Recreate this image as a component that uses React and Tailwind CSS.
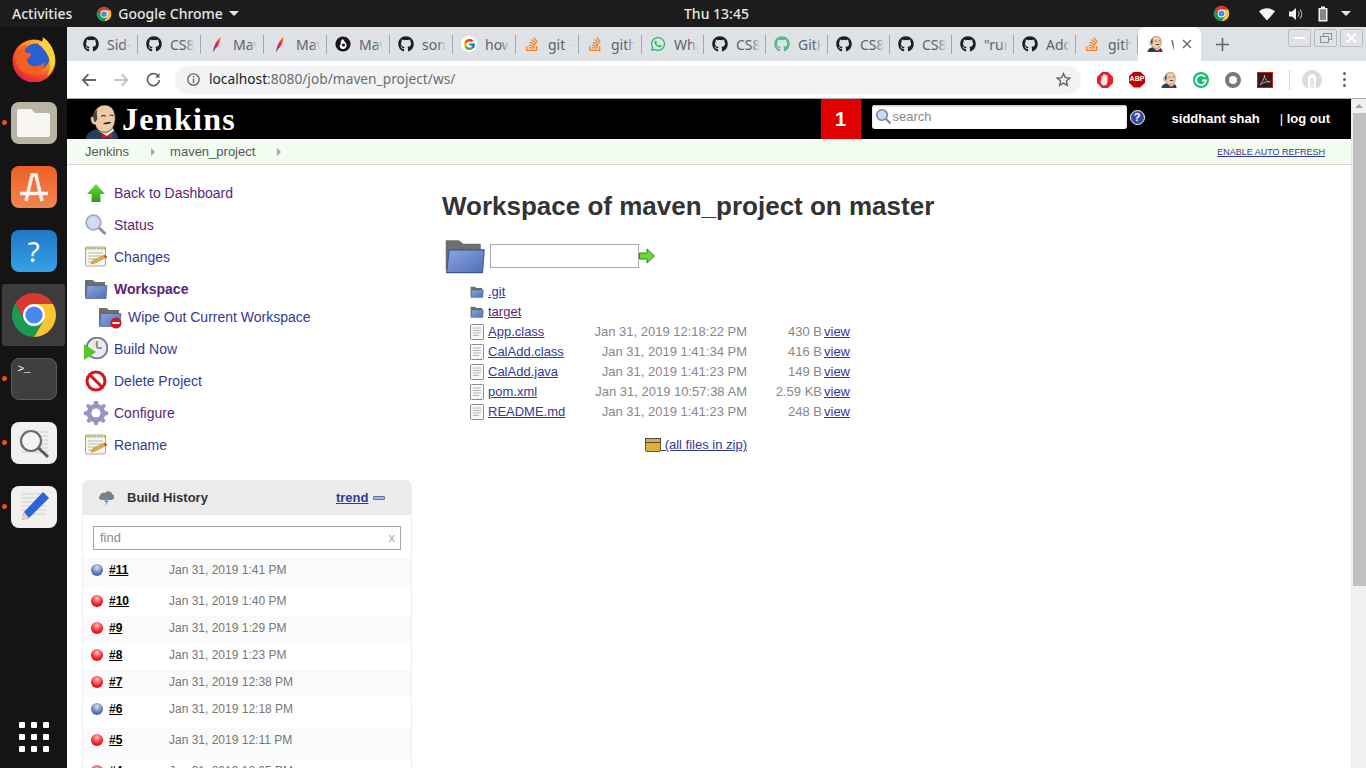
import { FaGithub, FaStackOverflow, FaWhatsapp } from 'react-icons/fa';
import { FcGoogle } from 'react-icons/fc';

const uiFont = "font-['Noto_Sans',sans-serif]";

function ChromeIcon({ size = 16 }) {
  return (
    <svg width={size} height={size} viewBox="0 0 48 48">
      <path d="M5.5 12A22 22 0 0 1 43 13L24 13L14.5 29.5Z" fill="#d93a2f" />
      <path d="M43 13A22 22 0 0 1 24 46L33.5 29.5L24 13Z" fill="#fbc531" />
      <path d="M24 46A22 22 0 0 1 5.5 12L14.5 29.5L33.5 29.5Z" fill="#179c52" />
      <circle cx="24" cy="24" r="11" fill="#fff" />
      <circle cx="24" cy="24" r="8.6" fill="#4688f1" />
    </svg>
  );
}

function FirefoxIcon() {
  return (
    <svg width="46" height="46" viewBox="0 0 46 46">
      <defs>
        <radialGradient id="ffOuter" cx="0.7" cy="0.2" r="0.95">
          <stop offset="0" stopColor="#ffd23a" />
          <stop offset="0.45" stopColor="#ff8a1f" />
          <stop offset="0.8" stopColor="#f0312f" />
          <stop offset="1" stopColor="#c81c78" />
        </radialGradient>
      </defs>
      <circle cx="23" cy="25" r="21.5" fill="url(#ffOuter)" />
      <circle cx="25" cy="21" r="13.5" fill="#2a5fd0" />
      <path d="M27 8C33 6 32 3 31.5 1C38 5 44 13 44 24C44 30 41 36 36 40C40 33 40 24 36 18C34 14 30 10 27 8Z" fill="#ffd23a" />
      <path d="M4 19C7 13 12 9 17 9C14 12 13 14 15 17C18 16 21 18 20 20C16 22 15 25 18 28C23 32 30 30 34 26C33 34 26 40 17 38C9 36 4 28 4 19Z" fill="#f5601f" />
    </svg>
  );
}

function JenkinsHead({ size = 16 }) {
  return (
    <svg width={size} height={size} viewBox="0 0 34 36">
      <path d="M0 36C0 31 5 27 10 26L28 26C31 28 34 31 34 36Z" fill="#23405f" />
      <path d="M14 28L22 33L30 27L28 24L14 24Z" fill="#eee" />
      <path d="M8 13C8 5 14 0 20 0C27 0 31 6 31 14C31 22 27 29 20 29C15 29 11 26 10 21C7 21 5 18 5 15C5 12 7 11 8 13Z" fill="#efcaa4" stroke="#2d2522" strokeWidth=".8" />
      <path d="M8 13C8 9 10 6 12 5C11 9 12 12 12 15C11 17 10 18 9 18C8 16 8 14 8 13Z" fill="#4a4442" />
      <path d="M16 12C18 11 20 11 21 12M25 11C26 10.5 28 10.5 29 11.5" stroke="#2d2522" strokeWidth="1.1" fill="none" />
      <path d="M18 20C20 18 24 18 27 18C26 20 21 21 18 20Z" fill="#2d2522" />
      <path d="M17 30L22.5 33L28 30V36L22.5 33.5L17 36Z" fill="#d3161c" />
    </svg>
  );
}

function FeatherIcon() {
  return (
    <svg width="16" height="16" viewBox="0 0 16 16">
      <defs>
        <linearGradient id="feather" x1="0" y1="1" x2="1" y2="0">
          <stop offset="0" stopColor="#6f3a9e" />
          <stop offset="0.5" stopColor="#e0264f" />
          <stop offset="1" stopColor="#f79321" />
        </linearGradient>
      </defs>
      <path d="M4 15.5C5 10 7.5 4 11.5 1C11.5 5 10 10 6 13L4.8 15.5Z" fill="url(#feather)" />
    </svg>
  );
}

function MoonIcon() {
  return (
    <svg width="16" height="16" viewBox="0 0 16 16">
      <circle cx="8" cy="8" r="7.6" fill="#161616" />
      <path d="M8 3C6 4 5 6 6 8C4 9 4.5 12 7 13C10 13.5 12 11 11.5 8.5C11 6 9 5.5 8 3Z" fill="#fff" />
      <circle cx="8.5" cy="9" r="1.6" fill="#161616" />
    </svg>
  );
}

const tabs = [
  { title: 'Sid-', kind: 'github', width: 'w-[63px]' },
  { title: 'CS8', kind: 'github', width: 'w-[63px]' },
  { title: 'Maven', kind: 'feather', width: 'w-[63px]' },
  { title: 'Maven', kind: 'feather', width: 'w-[63px]' },
  { title: 'Maven', kind: 'moon', width: 'w-[63px]' },
  { title: 'sonar', kind: 'github', width: 'w-[63px]' },
  { title: 'how', kind: 'google', width: 'w-[63px]' },
  { title: 'git -', kind: 'stack', width: 'w-[63px]' },
  { title: 'github', kind: 'stack', width: 'w-[63px]' },
  { title: 'Wha', kind: 'whatsapp', width: 'w-[62px]' },
  { title: 'CS8', kind: 'github', width: 'w-[62px]' },
  { title: 'GitHub', kind: 'githubGreen', width: 'w-[62px]' },
  { title: 'CS8', kind: 'github', width: 'w-[62px]' },
  { title: 'CS8', kind: 'github', width: 'w-[62px]' },
  { title: '"run', kind: 'github', width: 'w-[62px]' },
  { title: 'Add', kind: 'github', width: 'w-[62px]' },
  { title: 'github', kind: 'stack', width: 'w-[62px]' },
];

function TabIcon({ kind }) {
  if (kind === 'github') return <FaGithub className="text-[16px] text-[#1b1f23]" />;
  if (kind === 'githubGreen') return <FaGithub className="text-[16px] text-[#4fbf85]" />;
  if (kind === 'feather') return <FeatherIcon />;
  if (kind === 'moon') return <MoonIcon />;
  if (kind === 'stack') return <FaStackOverflow className="text-[16px] text-[#f48024]" />;
  if (kind === 'whatsapp') return <FaWhatsapp className="text-[16px] text-[#1ebe57]" />;
  return (
    <span className="flex h-4 w-4 items-center justify-center rounded-full bg-white">
      <FcGoogle className="text-[13px]" />
    </span>
  );
}

function TopBar() {
  return (
    <div className={`relative flex h-[27px] shrink-0 items-center bg-[#1c1c1c] text-[14px] font-medium text-[#e6e6e6] ${uiFont}`}>
      <span className="ml-[12px]">Activities</span>
      <span className="ml-[24px]"><ChromeIcon size={16} /></span>
      <span className="ml-[6px]">Google Chrome</span>
      <span className="ml-[6px] h-0 w-0 border-x-[5px] border-t-[5px] border-x-transparent border-t-[#e6e6e6]" />
      <span className="absolute left-[684px]">Thu 13:45</span>
      <div className="ml-auto flex items-center">
        <ChromeIcon size={17} />
        <svg className="ml-[29px]" width="16" height="14" viewBox="0 0 16 14">
          <path d="M0 4.5C4.5 .3 11.5 .3 16 4.5L8 13.5Z" fill="#f2f2f2" />
        </svg>
        <svg className="ml-[13px]" width="16" height="14" viewBox="0 0 16 14">
          <path d="M1 4.5H4L8 1V13L4 9.5H1Z" fill="#f2f2f2" />
          <path d="M10 4.5C11.3 5.8 11.3 8.2 10 9.5M12 2.5C14.4 5 14.4 9 12 11.5" stroke="#a8a8a8" strokeWidth="1.1" fill="none" />
        </svg>
        <svg className="ml-[13px]" width="12" height="16" viewBox="0 0 12 16">
          <path d="M4 .5H8V2H10.5V15.5H1.5V2H4Z" fill="#f2f2f2" />
          <rect x="3" y="3.5" width="6" height="10.5" fill="#555" />
          <rect x="3" y="4" width="6" height="10" fill="#e8e8e8" opacity=".35" />
        </svg>
        <span className="ml-[12px] mr-[15px] h-0 w-0 border-x-[5px] border-t-[5px] border-x-transparent border-t-[#e6e6e6]" />
      </div>
    </div>
  );
}

function WindowButton({ children }) {
  return (
    <span className="flex h-[18px] w-[23px] items-center justify-center rounded-[2px] border border-[#b9bcc2] bg-[#e0e2e7]">
      {children}
    </span>
  );
}

function TabStrip() {
  return (
    <div className={`flex h-[34px] shrink-0 items-end bg-[#dee1e6] pl-[8px] ${uiFont}`}>
      {tabs.map((tab, i) => (
        <div key={i} className={`${tab.width} relative flex h-[34px] items-center`}>
          <span className="absolute right-0 top-[8px] h-[19px] w-px bg-[#a3a6ab]" />
          <span className="ml-[8px] flex w-[16px] shrink-0 justify-center"><TabIcon kind={tab.kind} /></span>
          <span className="relative ml-[8px] w-[24px] overflow-hidden whitespace-nowrap text-[14px] text-[#5f6368]">
            {tab.title}
            <span className="absolute inset-y-0 right-0 w-[8px] bg-linear-to-r from-transparent to-[#dee1e6]" />
          </span>
        </div>
      ))}
      <div className="flex h-[34px] w-[63px] items-center rounded-t-[8px] bg-white">
        <span className="ml-[9px]"><JenkinsHead size={16} /></span>
        <span className="ml-[8px] w-[3px] overflow-hidden text-[14px] text-[#5f6368]">W</span>
        <svg className="ml-[8px]" width="10" height="10" viewBox="0 0 10 10">
          <path d="M1 1L9 9M9 1L1 9" stroke="#5f6368" strokeWidth="1.4" />
        </svg>
      </div>
      <svg className="mb-[10px] ml-[15px]" width="13" height="13" viewBox="0 0 13 13">
        <path d="M6.5 0V13M0 6.5H13" stroke="#5f6368" strokeWidth="1.6" />
      </svg>
      <div className="mb-[14px] ml-auto mr-[3px] flex gap-[3px] self-end">
        <WindowButton><span className="h-[2px] w-[11px] bg-white" /></WindowButton>
        <WindowButton>
          <svg width="12" height="10" viewBox="0 0 12 10" fill="none" stroke="#8f9297">
            <rect x="3.5" y=".5" width="8" height="6" />
            <rect x=".5" y="3.5" width="8" height="6" fill="#e0e2e7" />
          </svg>
        </WindowButton>
        <WindowButton>
          <svg width="11" height="10" viewBox="0 0 11 10"><path d="M1 .5L10 9.5M10 .5L1 9.5" stroke="#fff" strokeWidth="2" /></svg>
        </WindowButton>
      </div>
    </div>
  );
}

function ToolbarIcons() {
  return (
    <div className="ml-[16px] flex items-center">
      <span className="flex w-[16px] justify-center">
        <svg width="16" height="16" viewBox="0 0 16 16">
          <path d="M5 0H11L16 5V11L11 16H5L0 11V5Z" fill="#ee1c25" />
          <path d="M4.5 7V4.5C4.5 3.5 6 3.5 6 4.5V3C6 2 7.5 2 7.5 3V3C7.5 2 9 2 9 3V4C9 3 10.5 3 10.5 4V9C10.5 12 9 13.5 7 13.5C5 13.5 4 12 3.5 9.5Z" fill="#f3e9e4" />
        </svg>
      </span>
      <span className="ml-[16px] flex h-[16px] w-[16px] items-center justify-center bg-[#c80000] [clip-path:polygon(30%_0,70%_0,100%_30%,100%_70%,70%_100%,30%_100%,0_70%,0_30%)] font-['Liberation_Sans',sans-serif] text-[7px] font-bold text-white">ABP</span>
      <span className="ml-[16px]"><JenkinsHead size={16} /></span>
      <span className="ml-[16px] flex h-[16px] w-[16px] items-center justify-center rounded-full bg-[#12c070]">
        <svg width="12" height="12" viewBox="0 0 12 12" fill="none" stroke="#fff" strokeWidth="1.8">
          <path d="M10 3A5 5 0 1 0 11 6.5H7" />
        </svg>
      </span>
      <span className="ml-[16px] flex h-[16px] w-[16px] items-center justify-center rounded-full border-[4px] border-[#777] bg-white" />
      <span className="ml-[16px] flex h-[16px] w-[16px] items-center justify-center border border-[#d01818] bg-[#2a1e1e]">
        <svg width="12" height="12" viewBox="0 0 12 12" fill="none" stroke="#e8a8a0" strokeWidth=".9">
          <path d="M1 11C3 9 6 3 5.5 1C5 3 7 7 11 8C8 7.5 4 8 1 11Z" />
        </svg>
      </span>
      <span className="ml-[16px] h-[20px] w-px bg-[#d5d7db]" />
      <svg className="ml-[12px]" width="20" height="20" viewBox="0 0 20 20">
        <circle cx="10" cy="10" r="10" fill="#d9dbdf" />
        <path d="M6 20C6.5 15 5.5 12 6 8.5C6.5 5.5 8 4 10 4C12.5 4 14 6 14 9C14 12 13.5 15 14 20Z" fill="#fff" />
        <path d="M8 18C8 15 7.5 12 8 9C8.5 7 11.5 7 12 9C12.5 12 12 15 12 18Z" fill="#e6e7ea" />
      </svg>
      <span className="ml-[21px] flex flex-col gap-[3px]">
        <span className="h-[3px] w-[3px] rounded-full bg-[#5f6368]" />
        <span className="h-[3px] w-[3px] rounded-full bg-[#5f6368]" />
        <span className="h-[3px] w-[3px] rounded-full bg-[#5f6368]" />
      </span>
    </div>
  );
}

function Toolbar() {
  return (
    <div className={`flex h-[38px] shrink-0 items-center border-b border-[#a9abae] bg-white ${uiFont}`}>
      <svg className="ml-[14px]" width="16" height="14" viewBox="0 0 16 14" fill="none" stroke="#5f6368" strokeWidth="1.8">
        <path d="M15 7H2M7.5 1.2L1.8 7L7.5 12.8" />
      </svg>
      <svg className="ml-[16px]" width="16" height="14" viewBox="0 0 16 14" fill="none" stroke="#bfc2c6" strokeWidth="1.8">
        <path d="M1 7H14M8.5 1.2L14.2 7L8.5 12.8" />
      </svg>
      <svg className="ml-[17px]" width="15" height="15" viewBox="0 0 15 15" fill="none" stroke="#5f6368" strokeWidth="1.7">
        <path d="M12.6 4.6A6 6 0 1 0 13.4 8.2" />
        <path d="M13.5 1V5.5H9" fill="#5f6368" stroke="none" />
      </svg>
      <div className="ml-[14px] flex h-[28px] w-[906px] items-center rounded-full bg-[#f1f3f4]">
        <svg className="ml-[12px]" width="13" height="13" viewBox="0 0 13 13" fill="none" stroke="#5f6368" strokeWidth="1.3">
          <circle cx="6.5" cy="6.5" r="5.7" />
          <path d="M6.5 5.6V10M6.5 3V4.4" />
        </svg>
        <span className="ml-[9px] text-[13.75px] text-[#6b6e72]">
          <span className="text-[#202124]">localhost</span>:8080/job/maven_project/ws/
        </span>
        <svg className="ml-auto mr-[10px]" width="15" height="15" viewBox="0 0 24 24" fill="none" stroke="#5f6368" strokeWidth="2.2">
          <path d="M12 2.5L14.9 9L22 9.7L16.6 14.4L18.2 21.4L12 17.7L5.8 21.4L7.4 14.4L2 9.7L9.1 9Z" />
        </svg>
      </div>
      <ToolbarIcons />
    </div>
  );
}

function DockItem({ dot, selected, children }) {
  return (
    <div className="relative flex h-[64px] w-full items-center justify-center">
      {dot && <span className="absolute left-[2px] top-[29px] h-[5px] w-[5px] rounded-full bg-[#e95420]" />}
      {selected && <span className="absolute inset-x-[2px] inset-y-[1px] rounded-[3px] bg-[#3c3c3c]" />}
      <span className="relative">{children}</span>
    </div>
  );
}

function Dock() {
  return (
    <aside className="flex w-[67px] shrink-0 flex-col items-center bg-[#141414]">
      <DockItem><FirefoxIcon /></DockItem>
      <DockItem dot>
        <span className="flex h-[42px] w-[46px] items-center justify-center rounded-[8px] bg-[#b9b4a6]">
          <svg width="33" height="28" viewBox="0 0 33 28">
            <path d="M2 0H14L18 4H31C32 4 33 5 33 6V26C33 27 32 28 31 28H2C1 28 0 27 0 26V2C0 1 1 0 2 0Z" fill="#f7f6f3" />
          </svg>
        </span>
      </DockItem>
      <DockItem>
        <span className="flex h-[42px] w-[46px] items-center justify-center rounded-[8px] bg-linear-to-b from-[#ef6024] to-[#f08550]">
          <svg width="30" height="32" viewBox="0 0 30 32" fill="none" stroke="#fbf3ee" strokeWidth="3.4">
            <path d="M7 30L13 4H17L23 30M1 22.5H29" />
          </svg>
        </span>
      </DockItem>
      <DockItem>
        <span className={`flex h-[42px] w-[46px] items-center justify-center rounded-[8px] bg-linear-to-b from-[#1f78c8] to-[#37a0e6] text-[28px] font-normal text-white ${uiFont}`}>?</span>
      </DockItem>
      <DockItem dot selected><ChromeIcon size={48} /></DockItem>
      <DockItem dot>
        <span className="flex h-[42px] w-[46px] rounded-[8px] border border-[#5a5a5a] bg-[#3e3e3e] pl-[6px] pt-[2px] font-['Liberation_Mono',monospace] text-[11px] text-white">&gt;_</span>
      </DockItem>
      <DockItem dot>
        <span className="flex h-[42px] w-[46px] items-center justify-center rounded-[8px] bg-[#f1f0ee]">
          <svg width="34" height="34" viewBox="0 0 34 34" fill="none">
            <path d="M5 6H31M5 10H31M5 14H31M5 18H31M5 22H31M5 26H31" stroke="#d2cdc0" />
            <circle cx="14" cy="15" r="10" fill="#f4f4f4" stroke="#6b6b6b" strokeWidth="2.2" />
            <path d="M21.5 22L31 31" stroke="#5a5a5a" strokeWidth="3" />
          </svg>
        </span>
      </DockItem>
      <DockItem dot>
        <span className="flex h-[42px] w-[46px] items-center justify-center rounded-[8px] bg-[#f1f0ee]">
          <svg width="36" height="36" viewBox="0 0 36 36" fill="none">
            <path d="M6 5H30M6 9H30M6 13H30M6 17H30M6 21H30M6 25H30" stroke="#cfcfcf" />
            <path d="M27 3L33 9L13 29L6 31L8 23Z" fill="#2f62d8" />
            <path d="M8 23L13 29L6 31Z" fill="#f2d4a8" />
          </svg>
        </span>
      </DockItem>
      <div className="mb-[16px] mt-auto grid grid-cols-3 gap-[6px]">
        {[0, 1, 2, 3, 4, 5, 6, 7, 8].map(n => (
          <span key={n} className="h-[6px] w-[6px] rounded-[1px] bg-white" />
        ))}
      </div>
    </aside>
  );
}

function JenkinsHeader() {
  return (
    <div className="flex h-[40px] shrink-0 items-center bg-black font-['Liberation_Sans',sans-serif]">
      <span className="ml-[18px] self-end leading-[0]"><JenkinsHead size={34} /></span>
      <span className="ml-[3px] font-['Liberation_Serif',serif] text-[32px] font-bold leading-none tracking-[1.3px] text-white">Jenkins</span>
      <div className="ml-auto flex h-[40px] w-[40px] items-center justify-center bg-[#e00000] text-[20px] font-bold text-white">1</div>
      <div className="relative ml-[11px] mb-[4px] flex h-[24px] w-[255px] items-center rounded-[3px] bg-white pl-[21px] text-[13px] text-[#8a8a8a] shadow-[inset_0_1px_2px_#bbb]">
        <svg className="absolute left-[3px] top-[3px]" width="17" height="17" viewBox="0 0 17 17" fill="none">
          <circle cx="7" cy="7" r="5.3" fill="#c9d9f0" stroke="#6f87ab" strokeWidth="1.6" />
          <path d="M11 11L15.5 15.5" stroke="#7b8794" strokeWidth="2" />
        </svg>
        search
      </div>
      <span className="ml-[3px] mb-[3px] flex h-[15px] w-[15px] items-center justify-center rounded-full border border-white bg-[#3a4aa0] text-[11px] font-bold leading-none text-white">?</span>
      <span className="ml-[27px] text-[13px] font-bold text-white">siddhant shah</span>
      <span className="ml-[20px] mr-[21px] text-[13px] font-bold text-white"><span className="font-normal">|</span> log out</span>
    </div>
  );
}

function Breadcrumbs() {
  return (
    <div className="flex h-[26px] shrink-0 items-center border-b border-[#d3d7cf] bg-[#f3fcf0] pl-[18px] font-['Liberation_Sans',sans-serif] text-[13px] text-[#555753]">
      <span>Jenkins</span>
      <span className="ml-[22px] h-0 w-0 border-y-[4px] border-l-[4px] border-y-transparent border-l-[#a8aaa6]" />
      <span className="ml-[15px]">maven_project</span>
      <span className="ml-[22px] h-0 w-0 border-y-[4px] border-l-[4px] border-y-transparent border-l-[#a8aaa6]" />
      <a className="ml-auto mr-[26px] mt-[2px] text-[9px] text-[#33399b] underline">ENABLE AUTO REFRESH</a>
    </div>
  );
}

function FolderIcon({ size = 24 }) {
  return (
    <svg width={size} height={size} viewBox="0 0 24 24">
      <defs>
        <linearGradient id="folderFront" x1="0" y1="0" x2="1" y2="1">
          <stop offset="0" stopColor="#8ba6dc" />
          <stop offset="1" stopColor="#4f6fb8" />
        </linearGradient>
      </defs>
      <path d="M1 3H8.5L11 5H21V20H1Z" fill="#6e6e6e" />
      <path d="M3 8.5H23L22 21.5H1.5Z" fill="url(#folderFront)" stroke="#3d5590" strokeWidth=".6" />
    </svg>
  );
}

function NoteIcon() {
  return (
    <svg width="24" height="24" viewBox="0 0 24 24">
      <rect x="1.5" y="2" width="20" height="19" rx="1" fill="#f6f6f0" stroke="#a8a8a0" />
      <path d="M2 3.5H21" stroke="#b5a83a" strokeWidth="2" strokeDasharray="1.4 .8" />
      <path d="M4 8H19M4 11H19M4 14H13M4 17H10" stroke="#b8b8b0" />
      <path d="M7 19L9 15.5L21 10L23 12L11 18Z" fill="#e4b33a" stroke="#8a6a20" strokeWidth=".5" />
      <path d="M20.5 10.2L23 12L22 12.8L19.6 11Z" fill="#cc2222" />
    </svg>
  );
}

function SidebarIcon({ kind }) {
  if (kind === 'up') {
    return (
      <svg width="24" height="24" viewBox="0 0 24 24">
        <defs>
          <linearGradient id="upArrow" x1="0" y1="0" x2="0" y2="1">
            <stop offset="0" stopColor="#6fdc3a" />
            <stop offset="1" stopColor="#2f9a14" />
          </linearGradient>
        </defs>
        <path d="M12 3L21 13H16.5V21H7.5V13H3Z" fill="url(#upArrow)" />
      </svg>
    );
  }
  if (kind === 'search') {
    return (
      <svg width="24" height="24" viewBox="0 0 24 24" fill="none">
        <path d="M14 14L21.5 21" stroke="#8a8f96" strokeWidth="3" />
        <circle cx="9.5" cy="9.5" r="7.3" fill="#cfdcf3" stroke="#a6abb3" strokeWidth="1.8" />
      </svg>
    );
  }
  if (kind === 'note') return <NoteIcon />;
  if (kind === 'folder') return <FolderIcon />;
  if (kind === 'wipe') {
    return (
      <span className="relative block h-[24px] w-[24px]">
        <FolderIcon />
        <svg className="absolute bottom-0 right-0" width="12" height="12" viewBox="0 0 12 12">
          <circle cx="6" cy="6" r="5.5" fill="#d8141b" />
          <rect x="2.5" y="5" width="7" height="2" fill="#fff" />
        </svg>
      </span>
    );
  }
  if (kind === 'clock') {
    return (
      <svg width="24" height="24" viewBox="0 0 24 24">
        <circle cx="13" cy="11" r="10.4" fill="#ece9f0" stroke="#7c7494" strokeWidth="1.8" />
        <path d="M13 3V11L9 7" fill="#e8e39a" />
        <path d="M13 4V11H18" stroke="#444" fill="none" />
        <path d="M0 7L12 15L0 23Z" fill="#50c828" />
      </svg>
    );
  }
  if (kind === 'delete') {
    return (
      <svg width="24" height="24" viewBox="0 0 24 24" fill="none">
        <circle cx="12" cy="12" r="9" fill="#fff" stroke="#d8141b" strokeWidth="3" />
        <path d="M6 6L18 18" stroke="#d8141b" strokeWidth="3" />
      </svg>
    );
  }
  return (
    <svg width="24" height="24" viewBox="0 0 24 24">
      <path d="M10 0H14L14.6 3.2L17.4 4.4L20.2 2.6L22 5L20 7.6L21 10L24 10.6V14L21 14.8L20 17.2L21.6 20L19.2 22L16.6 20.2L14.2 21.2L13.6 24H10.4L9.8 21.2L7.4 20.2L4.8 22L2.4 20L4 17.2L3 14.8L0 14V10.6L3 10L4 7.6L2 5L3.8 2.6L6.6 4.4L9.4 3.2Z" fill="#9a94c2" />
      <circle cx="12" cy="12" r="4.6" fill="#fff" />
    </svg>
  );
}

const tasks = [
  { label: 'Back to Dashboard', icon: 'up', visited: true },
  { label: 'Status', icon: 'search', visited: true },
  { label: 'Changes', icon: 'note' },
  { label: 'Workspace', icon: 'folder', visited: true, bold: true },
  { label: 'Wipe Out Current Workspace', icon: 'wipe', sub: true },
  { label: 'Build Now', icon: 'clock' },
  { label: 'Delete Project', icon: 'delete' },
  { label: 'Configure', icon: 'gear', visited: true },
  { label: 'Rename', icon: 'note' },
];

const builds = [
  { id: '#11', date: 'Jan 31, 2019 1:41 PM', ok: true, h: 'h-[31px]' },
  { id: '#10', date: 'Jan 31, 2019 1:40 PM', h: 'h-[27px]' },
  { id: '#9', date: 'Jan 31, 2019 1:29 PM', h: 'h-[27px]' },
  { id: '#8', date: 'Jan 31, 2019 1:23 PM', h: 'h-[27px]' },
  { id: '#7', date: 'Jan 31, 2019 12:38 PM', h: 'h-[27px]' },
  { id: '#6', date: 'Jan 31, 2019 12:18 PM', ok: true, h: 'h-[31px]' },
  { id: '#5', date: 'Jan 31, 2019 12:11 PM', h: 'h-[31px]' },
  { id: '#4', date: 'Jan 31, 2019 12:05 PM', h: 'h-[27px]' },
];

function BuildBall({ ok }) {
  const colors = ok
    ? 'bg-[radial-gradient(circle_at_50%_30%,#d8deee,#5a72b4_60%,#3f5596)]'
    : 'bg-[radial-gradient(circle_at_50%_30%,#ffc0c0,#f01820_60%,#c80f18)]';
  return <span className={`block h-[12px] w-[12px] shrink-0 rounded-full ${colors}`} />;
}

function BuildHistory() {
  return (
    <div className="mt-[19px] w-[330px] rounded-t-[6px] border-x border-[#f0f0f0] pb-4">
      <div className="flex h-[35px] items-center rounded-t-[6px] bg-[#ececec] pl-[15px]">
        <svg width="17" height="16" viewBox="0 0 17 16">
          <path d="M4 10C1 10 0 7 2 6C2 3 5 2 7 3C9 0 14 1 14 4C17 5 17 10 13 10Z" fill="#7d7f82" />
          <path d="M9 7L6 12H8.5L7 16L11 10.5H8.5L10 7Z" fill="#37a8ee" />
        </svg>
        <span className="ml-[12px] text-[13px] font-bold text-[#333]">Build History</span>
        <a className="ml-[128px] text-[13px] font-bold text-[#33399b] underline">trend</a>
        <span className="ml-[5px] h-[4px] w-[12px] rounded-[1px] border border-[#5c6fb0] bg-[#a9b7de]" />
      </div>
      <div className="px-[10px] pt-[11px]">
        <div className="flex h-[24px] items-center justify-between border border-[#a6a6a6] pl-[6px] pr-[5px] text-[13px] text-[#8a8a8a]">
          <span>find</span>
          <span className="text-[#aaa]">x</span>
        </div>
      </div>
      <div className="mt-[8px]">
        {builds.map((b, i) => (
          <div key={b.id} className={`${b.h} flex items-start pl-[8px] ${i % 2 === 0 ? 'bg-[#fafafa]' : 'bg-white'}`}>
            <span className="mt-[6px]"><BuildBall ok={b.ok} /></span>
            <a className="ml-[6px] mt-[4px] w-[60px] text-[12px] font-bold leading-4 text-black underline">{b.id}</a>
            <span className="mt-[4px] text-[12px] leading-4 text-[#777]">{b.date}</span>
          </div>
        ))}
      </div>
    </div>
  );
}

function Sidebar() {
  return (
    <aside className="w-[375px] shrink-0 pl-[15px] pt-[12px] text-[14px]">
      {tasks.map(task => (
        <div
          key={task.label}
          className={task.sub ? 'mb-[4px] flex h-[24px] items-center pl-[16px]' : 'flex h-[32px] items-center pl-[2px]'}
        >
          <span className="mr-[6px] w-[24px]"><SidebarIcon kind={task.icon} /></span>
          <a className={`${task.visited ? 'text-[#5b1f76]' : 'text-[#33399b]'} ${task.bold ? 'font-bold' : ''}`}>{task.label}</a>
        </div>
      ))}
      <BuildHistory />
    </aside>
  );
}

function FileIcon() {
  return (
    <svg width="14" height="16" viewBox="0 0 14 16" fill="none">
      <rect x=".5" y=".5" width="13" height="15" rx="1" fill="#f8f8f8" stroke="#8c8c8c" />
      <path d="M3 4H11M3 6.5H11M3 9H11M3 11.5H9" stroke="#b5b5b5" />
    </svg>
  );
}

const files = [
  { name: '.git', dir: true },
  { name: 'target', dir: true, visited: true },
  { name: 'App.class', date: 'Jan 31, 2019 12:18:22 PM', size: '430 B' },
  { name: 'CalAdd.class', date: 'Jan 31, 2019 1:41:34 PM', size: '416 B' },
  { name: 'CalAdd.java', date: 'Jan 31, 2019 1:41:23 PM', size: '149 B' },
  { name: 'pom.xml', date: 'Jan 31, 2019 10:57:38 AM', size: '2.59 KB' },
  { name: 'README.md', date: 'Jan 31, 2019 1:41:23 PM', size: '248 B' },
];

function Workspace() {
  return (
    <main className="min-w-0 flex-1 pt-[25px]">
      <h1 className="text-[26px] font-bold leading-[32px] text-[#333]">Workspace of maven_project on master</h1>
      <div className="mt-[15px] flex h-[38px] items-center">
        <span className="ml-[2px]"><FolderIcon size={42} /></span>
        <span className="ml-[4px] h-[24px] w-[149px] border border-[#aaa] bg-white" />
        <svg width="16" height="16" viewBox="0 0 16 16">
          <path d="M.5 5H8V1L15.5 8L8 15V11H.5Z" fill="#6fd63a" stroke="#2f8a14" />
        </svg>
      </div>
      <div className="ml-[28px] mt-[7px] text-[13px]">
        {files.map(file => (
          <div key={file.name} className="flex h-[20px] items-center">
            <span className="flex w-[18px] justify-start">
              {file.dir ? <FolderIcon size={14} /> : <FileIcon />}
            </span>
            <a className={`w-[100px] underline ${file.visited ? 'text-[#5b1f76]' : 'text-[#33399b]'}`}>{file.name}</a>
            {!file.dir && (
              <>
                <span className="w-[159px] text-right text-[#888]">{file.date}</span>
                <span className="w-[75px] text-right text-[#888]">{file.size}</span>
                <a className="ml-[2px] text-[#33399b] underline">view</a>
              </>
            )}
          </div>
        ))}
        <div className="mt-[13px] flex h-[20px] w-[277px] items-center justify-end">
          <svg width="16" height="14" viewBox="0 0 16 14">
            <rect x=".5" y=".5" width="15" height="13" rx="1.5" fill="#e0ae3c" stroke="#7a5a18" />
            <rect x=".5" y=".5" width="15" height="4" fill="#b8b08a" stroke="#5c4a18" />
          </svg>
          <a className="text-[#33399b] underline">&nbsp;(all files in zip)</a>
        </div>
      </div>
    </main>
  );
}

export default function App() {
  return (
    <div className="flex h-screen flex-col overflow-hidden bg-white font-['Liberation_Sans',sans-serif]">
      <TopBar />
      <div className="flex min-h-0 flex-1">
        <Dock />
        <div className="flex min-w-0 flex-1 flex-col">
          <TabStrip />
          <Toolbar />
          <div className="flex min-h-0 flex-1">
            <div className="flex min-w-0 flex-1 flex-col">
              <JenkinsHeader />
              <Breadcrumbs />
              <div className="flex min-h-0 flex-1 overflow-hidden">
                <Sidebar />
                <Workspace />
              </div>
            </div>
            {/* scrollbar */}
            <div className="flex w-[15px] shrink-0 flex-col items-center border-l border-[#e7e7e7] bg-[#f1f1f1]">
              <span className="mt-[5px] h-0 w-0 border-x-[4px] border-b-[4px] border-x-transparent border-b-[#a3a3a3]" />
              <span className="mt-[5px] h-[473px] w-[13px] bg-[#c1c1c1]" />
            </div>
          </div>
        </div>
      </div>
    </div>
  );
}
